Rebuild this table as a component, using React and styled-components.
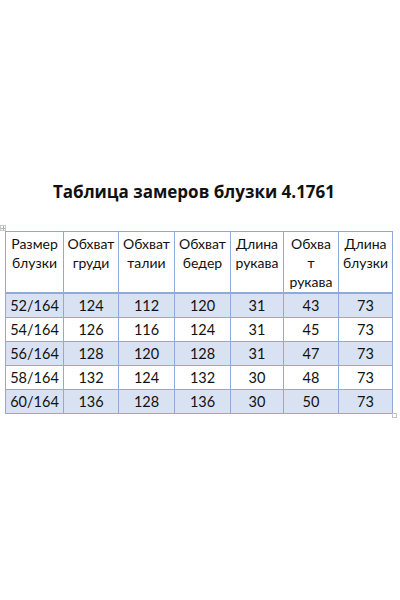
import React from "react";
import styled, { createGlobalStyle } from "styled-components";

const Global = createGlobalStyle`
  html, body { margin: 0; padding: 0; background: #ffffff; }
  body { font-family: "Open Sans", "Noto Sans", sans-serif; color: #111; }
`;

const Page = styled.div`
  width: 400px;
  height: 600px;
  display: flex;
  flex-direction: column;
  align-items: flex-start;
  background: #fff;
`;

const Title = styled.h1`
  margin: 180px 0 0 0;
  width: 388px;
  text-align: center;
  font-family: "Open Sans", sans-serif;
  font-weight: 700;
  font-size: 17px;
  line-height: 24px;
  color: #111;
`;

const TableWrap = styled.div`
  position: relative;
  margin: 27px 0 0 5px;
`;

const MoveHandle = styled.div`
  position: absolute;
  left: -5px;
  top: -6px;
  width: 4px;
  height: 4px;
  border: 1px solid #c8c8c8;
  background: #fff;
  &::before, &::after {
    content: "";
    position: absolute;
    background: #b0b0b0;
  }
  &::before { left: 1.5px; top: 0; width: 1px; height: 4px; }
  &::after { top: 1.5px; left: 0; height: 1px; width: 4px; }
`;

const ResizeHandle = styled.div`
  position: absolute;
  right: -4px;
  bottom: -4px;
  width: 3px;
  height: 3px;
  border: 1px solid #c4c4c4;
  background: #fff;
`;

const Table = styled.table`
  border-collapse: collapse;
  table-layout: fixed;
  width: 387px;
  font-family: "Lato", "Open Sans", sans-serif;
  font-size: 14px;
  color: #111;
`;

const Cell = styled.td`
  border: 1px solid #8eaadb;
  padding: 0;
  text-align: center;
  overflow: hidden;
  white-space: nowrap;
`;

const HeadCell = styled(Cell)`
  vertical-align: top;
  padding-top: 2px;
  height: 58px;
  line-height: 19px;
  border-bottom: 2px solid #8eaadb;
  font-size: 14px;
`;

const DataRow = styled.tr`
  background: ${(p) => (p.$shaded ? "#d9e2f3" : "#ffffff")};
`;

const DataCell = styled(Cell)`
  height: 23px;
  line-height: 23px;
  vertical-align: middle;
  font-size: 14.5px;
`;

const widths = [58, 55, 56, 56, 53, 55, 54];
const headers = [
  ["Размер", "блузки"],
  ["Обхват", "груди"],
  ["Обхват", "талии"],
  ["Обхват", "бедер"],
  ["Длина", "рукава"],
  ["Обхва", "т", "рукава"],
  ["Длина", "блузки"],
];
const rows = [
  ["52/164", "124", "112", "120", "31", "43", "73"],
  ["54/164", "126", "116", "124", "31", "45", "73"],
  ["56/164", "128", "120", "128", "31", "47", "73"],
  ["58/164", "132", "124", "132", "30", "48", "73"],
  ["60/164", "136", "128", "136", "30", "50", "73"],
];

export default function App() {
  return (
    <Page>
      <Global />
      <Title>Таблица замеров блузки 4.1761</Title>
      <TableWrap>
        <MoveHandle />
        <Table>
          <colgroup>
            {widths.map((w, i) => (
              <col key={i} style={{ width: w }} />
            ))}
          </colgroup>
          <tbody>
            <tr>
              {headers.map((h, i) => (
                <HeadCell key={i}>
                  {h.map((line, j) => (
                    <div key={j}>{line}</div>
                  ))}
                </HeadCell>
              ))}
            </tr>
            {rows.map((r, i) => (
              <DataRow key={i} $shaded={i % 2 === 0}>
                {r.map((c, j) => (
                  <DataCell key={j}>{c}</DataCell>
                ))}
              </DataRow>
            ))}
          </tbody>
        </Table>
        <ResizeHandle />
      </TableWrap>
    </Page>
  );
}
